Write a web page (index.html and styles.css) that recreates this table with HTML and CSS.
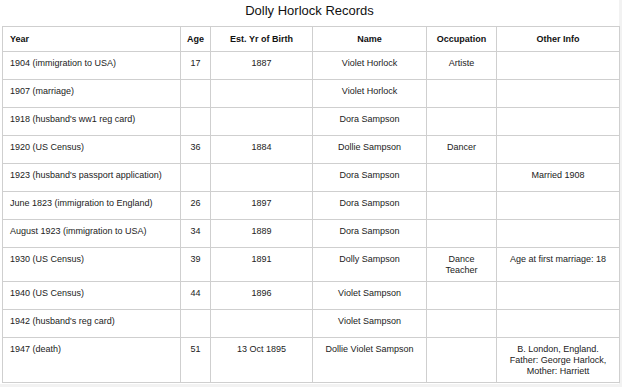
FILE: index.html
```html
<!DOCTYPE html>
<html lang="en">
<head>
    <meta charset="UTF-8">
    <meta name="viewport" content="width=device-width, initial-scale=1.0">
    <title>Dolly Horlock Records</title>
    <link rel="stylesheet" href="styles.css">
</head>
<body>
    <div class="sheet">
        <h1 class="sheet-title">Dolly Horlock Records</h1>
        <table class="records">
            <colgroup>
                <col class="col-year">
                <col class="col-age">
                <col class="col-birth">
                <col class="col-name">
                <col class="col-job">
                <col class="col-info">
            </colgroup>
            <thead>
                <tr>
                    <th class="left">Year</th>
                    <th>Age</th>
                    <th>Est. Yr of Birth</th>
                    <th>Name</th>
                    <th>Occupation</th>
                    <th>Other Info</th>
                </tr>
            </thead>
            <tbody>
                <tr>
                    <td class="left">1904 (immigration to USA)</td>
                    <td>17</td>
                    <td>1887</td>
                    <td>Violet Horlock</td>
                    <td>Artiste</td>
                    <td></td>
                </tr>
                <tr>
                    <td class="left">1907 (marriage)</td>
                    <td></td>
                    <td></td>
                    <td>Violet Horlock</td>
                    <td></td>
                    <td></td>
                </tr>
                <tr>
                    <td class="left">1918 (husband's ww1 reg card)</td>
                    <td></td>
                    <td></td>
                    <td>Dora Sampson</td>
                    <td></td>
                    <td></td>
                </tr>
                <tr>
                    <td class="left">1920 (US Census)</td>
                    <td>36</td>
                    <td>1884</td>
                    <td>Dollie Sampson</td>
                    <td>Dancer</td>
                    <td></td>
                </tr>
                <tr>
                    <td class="left">1923 (husband's passport application)</td>
                    <td></td>
                    <td></td>
                    <td>Dora Sampson</td>
                    <td></td>
                    <td>Married 1908</td>
                </tr>
                <tr>
                    <td class="left">June 1823 (immigration to England)</td>
                    <td>26</td>
                    <td>1897</td>
                    <td>Dora Sampson</td>
                    <td></td>
                    <td></td>
                </tr>
                <tr>
                    <td class="left">August 1923 (immigration to USA)</td>
                    <td>34</td>
                    <td>1889</td>
                    <td>Dora Sampson</td>
                    <td></td>
                    <td></td>
                </tr>
                <tr class="row-two">
                    <td class="left">1930 (US Census)</td>
                    <td>39</td>
                    <td>1891</td>
                    <td>Dolly Sampson</td>
                    <td>Dance<br>Teacher</td>
                    <td>Age at first marriage: 18</td>
                </tr>
                <tr>
                    <td class="left">1940 (US Census)</td>
                    <td>44</td>
                    <td>1896</td>
                    <td>Violet Sampson</td>
                    <td></td>
                    <td></td>
                </tr>
                <tr>
                    <td class="left">1942 (husband's reg card)</td>
                    <td></td>
                    <td></td>
                    <td>Violet Sampson</td>
                    <td></td>
                    <td></td>
                </tr>
                <tr class="row-three">
                    <td class="left">1947 (death)</td>
                    <td>51</td>
                    <td>13 Oct 1895</td>
                    <td>Dollie Violet Sampson</td>
                    <td></td>
                    <td>B. London, England.<br>Father: George Harlock,<br>Mother: Harriett</td>
                </tr>
            </tbody>
        </table>
    </div>
</body>
</html>
```

FILE: styles.css
```css
body {
    margin: 0;
    padding: 0;
    background-color: #f2f2f2;
    font-family: "Liberation Sans", Arial, sans-serif;
    color: #222;
}
.sheet {
    width: 619px;
    height: 384px;
    background: #ffffff;
}
.sheet-title {
    margin: 0;
    height: 26px;
    line-height: 22px;
    font-size: 13px;
    font-weight: normal;
    text-align: center;
    color: #111;
}
.records {
    margin-left: 2px;
    width: 617px;
    border-collapse: collapse;
    table-layout: fixed;
    font-size: 9px;
}
.col-year { width: 178px; }
.col-age { width: 30px; }
.col-birth { width: 102px; }
.col-name { width: 114px; }
.col-job { width: 70px; }
.col-info { width: 123px; }
.records th,
.records td {
    border: 1px solid #cfcfcf;
    text-align: center;
    vertical-align: top;
    line-height: 11px;
    padding: 6px 4px 5px;
}
.records th {
    height: 12px;
    padding-top: 7px;
    font-weight: bold;
    color: #111;
}
.records td {
    height: 16px;
}
.records .left {
    text-align: left;
    padding-left: 7px;
}
.records .row-two td {
    height: 22px;
}
.records .row-three td {
    height: 33px;
}
```
